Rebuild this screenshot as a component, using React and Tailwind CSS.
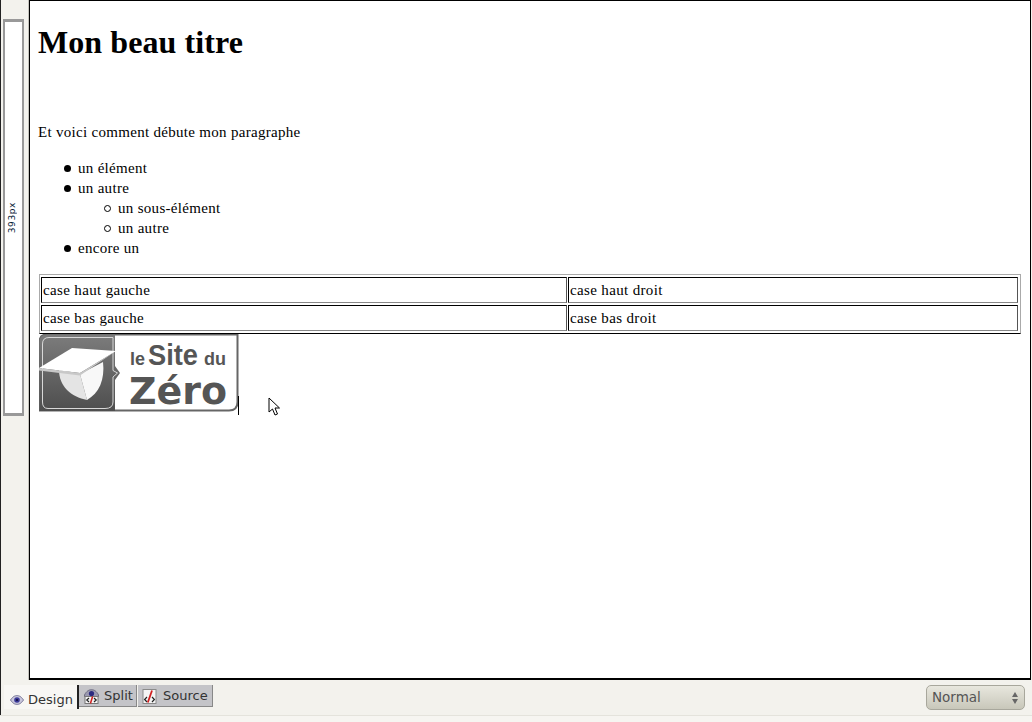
import React from "react";

function Eye({ className }) {
  return (
    <svg className={className} width="14" height="10" viewBox="0 0 14 10">
      <path d="M0.5 5C3 1.3 5 0.6 7 0.6S11 1.3 13.5 5C11 8.7 9 9.4 7 9.4S3 8.7 0.5 5Z" fill="#c8c6dc" stroke="#7a7898" strokeWidth="1" />
      <circle cx="7" cy="5" r="2.8" fill="#3c3a98" />
      <circle cx="7" cy="5" r="1.1" fill="#101040" />
    </svg>
  );
}

function SplitIcon() {
  return (
    <svg width="15" height="15" viewBox="0 0 15 15">
      <path d="M0.5 6C2.5 2 5 0.7 7.5 0.7S12.5 2 14.5 6V7.5H0.5Z" fill="#9a98b0" stroke="#6c6a80" strokeWidth="1" />
      <circle cx="7.5" cy="4.5" r="2.6" fill="#2c2a80" />
      <rect x="1" y="7.5" width="13" height="7" fill="#f4f4f4" stroke="#777" strokeWidth="1" />
      <path d="M5 9L2.8 11L5 13M10 9L12.2 11L10 13" fill="none" stroke="#222" strokeWidth="1.2" />
      <path d="M8.6 7.5L6.4 14.5" stroke="#d02020" strokeWidth="1.5" />
    </svg>
  );
}

function SourceIcon() {
  return (
    <svg width="15" height="15" viewBox="0 0 15 15">
      <rect x="1" y="0.5" width="13" height="14" fill="#f4f4f4" stroke="#8a8a8a" strokeWidth="1" />
      <path d="M5 8L2.6 10.5L5 13M10 8L12.4 10.5L10 13" fill="none" stroke="#222" strokeWidth="1.2" />
      <path d="M10 1.5L5.8 13.5" stroke="#d02020" strokeWidth="1.8" />
    </svg>
  );
}

function Bullet({ hollow }) {
  return hollow ? (
    <span className="w-[7px] h-[7px] rounded-full border border-black bg-white shrink-0" />
  ) : (
    <span className="w-[7px] h-[7px] rounded-full bg-black shrink-0" />
  );
}

function Li({ children, hollow }) {
  return (
    <li className="flex items-center h-5 gap-[7px]">
      <Bullet hollow={hollow} />
      <span>{children}</span>
    </li>
  );
}

function Cell({ children }) {
  return (
    <div className="h-[26px] border border-l-black border-t-black border-r-[#555] border-b-[#888] flex items-center pl-px">
      {children}
    </div>
  );
}

function Logo() {
  return (
    <svg width="200" height="78" viewBox="0 0 200 78" className="block">
      <defs>
        <linearGradient id="lg" x1="0" y1="0" x2="0" y2="1">
          <stop offset="0" stopColor="#7c7c7c" />
          <stop offset="1" stopColor="#4e4e4e" />
        </linearGradient>
      </defs>
      <path d="M8 0.5H198.5V68Q198.5 76.5 190 76.5H0.5V8Q0.5 0.5 8 0.5Z" fill="#fff" stroke="#666" strokeWidth="2" />
      <path d="M8 0.5H76V32L81 39L76 46V77H0.5V8Q0.5 0.5 8 0.5Z" fill="url(#lg)" />
      <path d="M10 3.5H74V36.5L78.5 39L74 43V68Q74 74.5 66 74.5H9Q3.5 74.5 3.5 68V10Q3.5 3.5 10 3.5Z" fill="none" stroke="#d8d8d8" strokeWidth="1" />
      <path d="M20 36C20 52 32 63 48 66L41 40Z" fill="#e4e4e4" />
      <path d="M41 40L64 28C66 46 60 59 48 66Z" fill="#f8f8f8" />
      <path d="M0 34L33 14L77 17L41 39Z" fill="#fff" />
      <path d="M0 34L41 39L77 17L41 41.5L0 36.5Z" fill="#c8c8c8" />
      <text x="91" y="31" fontFamily="'Liberation Sans', sans-serif" fontWeight="700" fontSize="18" fill="#555" textLength="15" lengthAdjust="spacingAndGlyphs">le</text>
      <text x="109" y="31" fontFamily="'Liberation Sans', sans-serif" fontWeight="700" fontSize="30" fill="#555" textLength="50" lengthAdjust="spacingAndGlyphs">Site</text>
      <text x="165" y="31" fontFamily="'Liberation Sans', sans-serif" fontWeight="700" fontSize="18" fill="#555" textLength="22" lengthAdjust="spacingAndGlyphs">du</text>
      <text x="90" y="70" fontFamily="'DejaVu Sans', sans-serif" fontWeight="700" fontSize="38" fill="#555" textLength="98" lengthAdjust="spacingAndGlyphs">Zéro</text>
    </svg>
  );
}

export default function App() {
  return (
    <div className="w-[1032px] h-[722px] overflow-hidden bg-[#f3f2ed] flex flex-col relative font-['Liberation_Serif',serif] text-black">
      <div className="flex h-[680px] shrink-0">
        <div className="w-[28px] shrink-0 border-l border-[#222] pt-[19px] pl-[2px]">
          <div className="w-[21px] h-[397px] border-2 border-[#999] border-t-[3px] border-b-[3px] bg-white flex items-center justify-center mr-[4px]">
            <span className="[writing-mode:vertical-rl] rotate-180 text-[9px] leading-none font-['DejaVu_Sans',sans-serif] text-[#052035] tracking-[0.6px] mr-[2px]">393px</span>
          </div>
        </div>
        <div className="w-[1003px] h-[680px] border-l border-[#c4c3bc] bg-[#c4c3bc]">
          <div className="w-[1002px] h-[680px] border border-black border-b-2 bg-white pl-[8px] pr-[9px] relative">
            <h1 className="text-[32px] leading-[37px] font-bold pt-[23px] h-[62px] box-content m-0 tracking-[0.08px]">Mon beau titre</h1>
            <p className="text-[15px] leading-5 mt-[36px] tracking-[0.3px]">Et voici comment débute mon paragraphe</p>
            <ul className="text-[15px] leading-5 mt-[16px] pl-[26px] tracking-[0.3px]">
              <Li>un élément</Li>
              <Li>un autre</Li>
              <ul className="pl-[40px]">
                <Li hollow>un sous-élément</Li>
                <Li hollow>un autre</Li>
              </ul>
              <Li>encore un</Li>
            </ul>
            <div className="mt-[16px] ml-[1px] w-[982px] h-[60px] border border-[#aaa] border-b-black pt-[2px] pl-px text-[15px] tracking-[0.35px]">
              <div className="grid grid-cols-[526px_450px] gap-x-px gap-y-[2px]">
                <Cell>case haut gauche</Cell>
                <Cell>case haut droit</Cell>
                <Cell>case bas gauche</Cell>
                <Cell>case bas droit</Cell>
              </div>
            </div>
            <div className="ml-[1px] w-[200px] relative">
              <Logo />
              <span className="absolute left-[199px] top-[62px] w-px h-[19px] bg-black" />
            </div>
            <svg className="absolute left-[238px] top-[396px]" width="14" height="20" viewBox="0 0 14 20">
              <path d="M1 1V15L4.5 12L7 18L9.5 17L7 11H11.5Z" fill="#fff" stroke="#000" strokeWidth="1" />
            </svg>
          </div>
        </div>
      </div>
      <div className="flex items-start h-[35px] border-l border-[#222] mr-[1px] pl-[3px] pt-[5px] text-[13px] font-['DejaVu_Sans',sans-serif] tracking-[0.02px] text-[#333]">
        <div className="w-[75px] h-[24px] bg-[#f8f7f4] border-r-2 border-[#222] flex items-center pl-[6px] gap-[4px] pt-[5px]">
          <Eye />
          <span>Design</span>
        </div>
        <div className="w-[58px] h-[22px] bg-[#c4c4c8] border-r border-b border-[#888] flex items-center pl-[5px] gap-[5px] pt-px">
          <SplitIcon />
          <span>Split</span>
        </div>
        <div className="ml-[1px] w-[75px] h-[22px] bg-[#c4c4c8] border-r border-b border-[#888] flex items-center pl-[4px] gap-[6px] pt-px">
          <SourceIcon />
          <span>Source</span>
        </div>
        <div className="ml-auto mr-[6px] w-[99px] h-[25px] rounded-[5px] border border-[#a8a79c] bg-gradient-to-b from-[#e8e7de] to-[#c8c7ba] flex items-center justify-between pl-[5px] pr-[6px] tracking-normal text-[#555]">
          <span className="text-[13.5px]">Normal</span>
          <span className="flex flex-col gap-[2px]">
            <span className="w-0 h-0 border-l-[3.5px] border-r-[3.5px] border-b-[5px] border-l-transparent border-r-transparent border-b-[#666]" />
            <span className="w-0 h-0 border-l-[3.5px] border-r-[3.5px] border-t-[5px] border-l-transparent border-r-transparent border-t-[#666]" />
          </span>
        </div>
      </div>
      <div className="flex-1 border-t border-[#e4e3dc] bg-[#f6f5f1]" />
    </div>
  );
}
